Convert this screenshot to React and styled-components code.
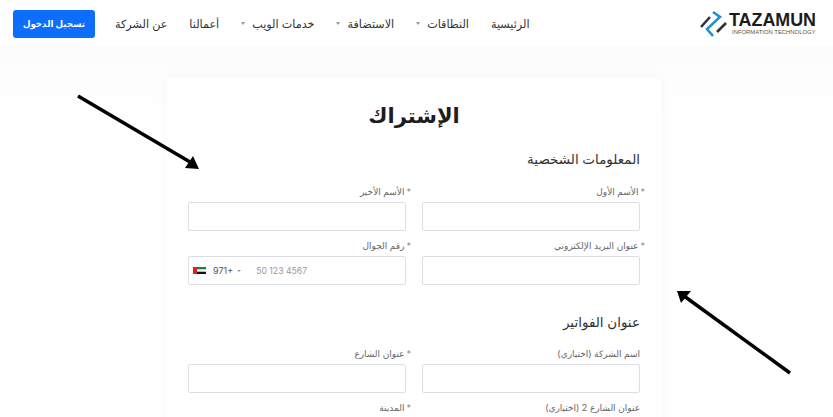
import React from 'react';
import styled, { createGlobalStyle } from 'styled-components';

const GlobalStyle = createGlobalStyle`
  html, body {
    margin: 0;
    padding: 0;
    height: 100%;
    overflow: hidden;
    background: #fff;
    font-family: Inter, "DejaVu Sans", sans-serif;
  }
`;

const navItems = [
  { name: 'الرئيسية' },
  { name: 'النطاقات', caret: true },
  { name: 'الاستضافة', caret: true },
  { name: 'خدمات الويب', caret: true },
  { name: 'أعمالنا' },
  { name: 'عن الشركة' },
];

const Logo = () => (
  <LogoWrap>
    <svg width="28" height="28" viewBox="0 0 28 28">
      <path d="M1 17 L10 7" stroke="#333" strokeWidth="2.6" fill="none" />
      <path d="M13 2 L20 7 L7 19 L13 26" stroke="#1f8fd6" strokeWidth="2.6" fill="none" />
      <path d="M17 22 L26 13" stroke="#333" strokeWidth="2.6" fill="none" />
    </svg>
    <LogoText>
      <LogoName>TAZAMUN</LogoName>
      <LogoSub>INFORMATION TECHNOLOGY</LogoSub>
    </LogoText>
  </LogoWrap>
);

const Field = ({ label, required, children }) => (
  <FieldWrap>
    <Label>
      {required && <Star>*</Star>}
      {label}
    </Label>
    {children || <Input />}
  </FieldWrap>
);

const App = () => (
  <Page dir="rtl">
    <GlobalStyle />
    <Header>
      <Logo />
      <Nav>
        {navItems.map((item) => (
          <NavItem key={item.name}>
            {item.name}
            {item.caret && <Caret />}
          </NavItem>
        ))}
      </Nav>
      <LoginButton>تسجيل الدخول</LoginButton>
    </Header>

    <Main>
      <Card>
        <Title>الإشتراك</Title>
        <Section>المعلومات الشخصية</Section>
        <Grid>
          <Field label="الأسم الأول" required />
          <Field label="الأسم الأخير" required />
          <Field label="عنوان البريد الإلكتروني" required />
          <Field label="رقم الجوال" required>
            <PhoneBox dir="ltr">
              <Flag>
                <svg width="13" height="7" viewBox="0 0 13 7">
                  <rect width="13" height="7" fill="#fff" />
                  <rect width="13" height="2.3" fill="#0a8a3c" />
                  <rect y="4.7" width="13" height="2.3" fill="#111" />
                  <rect width="4" height="7" fill="#e0201c" />
                </svg>
              </Flag>
              <Dial>971+</Dial>
              <SmallCaret />
              <Placeholder>50 123 4567</Placeholder>
            </PhoneBox>
          </Field>
        </Grid>

        <BillingSection>عنوان الفواتير</BillingSection>
        <Grid>
          <Field label="اسم الشركة (اختياري)" />
          <Field label="عنوان الشارع" required />
          <Field label="عنوان الشارع 2 (اختياري)" />
          <Field label="المدينة" required />
        </Grid>
      </Card>
    </Main>

    <Arrow width="833" height="417" viewBox="0 0 833 417">
      <path d="M78 96 L190 162" stroke="#000" strokeWidth="3.5" />
      <path d="M199 169 L185 168 L193 156 Z" fill="#000" />
      <path d="M790 373 L684 296" stroke="#000" strokeWidth="3.5" />
      <path d="M677 291 L691 291 L681 303 Z" fill="#000" />
    </Arrow>
  </Page>
);

const Page = styled.div`
  position: relative;
  width: 833px;
  height: 417px;
  overflow: hidden;
  background: linear-gradient(#f6f6f6, #fdfdfd 70px, #fff 120px);
`;

const Header = styled.header`
  display: flex;
  align-items: center;
  height: 47px;
  padding: 0 17px 0 13px;
  background: #fff;
  box-sizing: border-box;
`;

const LogoWrap = styled.div`
  display: flex;
  direction: ltr;
  align-items: center;
  gap: 1px;
`;

const LogoText = styled.div`
  display: flex;
  flex-direction: column;
  width: 87px;
`;

const LogoName = styled.span`
  font: bold 19px/16px "Liberation Sans", sans-serif;
  color: #1c1c1c;
  transform: scaleX(0.94);
  transform-origin: left center;
`;

const LogoSub = styled.span`
  margin: 2px 0 0 3px;
  font: 5.9px/5px "Liberation Sans", sans-serif;
  color: #555;
  white-space: nowrap;
`;

const Nav = styled.nav`
  display: flex;
  align-items: center;
  justify-content: flex-end;
  gap: 22px;
  flex: 1;
  margin-left: 20px;
`;

const NavItem = styled.span`
  display: flex;
  align-items: center;
  gap: 7px;
  font-size: 11.2px;
  color: #333;
  white-space: nowrap;
`;

const Caret = styled.i`
  width: 0;
  height: 0;
  border-left: 2.5px solid transparent;
  border-right: 2.5px solid transparent;
  border-top: 3px solid #999;
`;

const LoginButton = styled.button`
  width: 82px;
  height: 28px;
  padding: 0;
  border: 0;
  border-radius: 3px;
  background: #0d6efd;
  color: #fff;
  font: bold 8.7px Inter, "DejaVu Sans", sans-serif;
`;

const Main = styled.main`
  display: flex;
  padding: 31px 172px 0 0;
`;

const Card = styled.section`
  width: 494px;
  height: 400px;
  padding: 23px 21px;
  box-sizing: border-box;
  background: #fff;
  border-radius: 4px;
  box-shadow: 0 0 18px rgba(0, 0, 0, 0.03);
`;

const Title = styled.h1`
  margin: 0 0 19px;
  text-align: center;
  font-size: 21px;
  line-height: 30px;
  font-weight: 700;
  color: #1d1d1d;
`;

const Section = styled.h2`
  margin: 0 0 18px;
  font-size: 13.5px;
  line-height: 18px;
  font-weight: 500;
  color: #333;
`;

const BillingSection = styled(Section)`
  margin: 28px 0 17px;
`;

const Grid = styled.div`
  display: grid;
  grid-template-columns: 218px 218px;
  column-gap: 16px;
  row-gap: 9px;
`;

const FieldWrap = styled.div`
  display: flex;
  flex-direction: column;
  gap: 4px;
`;

const Label = styled.label`
  font-size: 9px;
  line-height: 12px;
  color: #666;
`;

const Star = styled.span`
  margin: 0 -5px 0 2px;
  color: #888;
`;

const Input = styled.div`
  height: 29px;
  box-sizing: border-box;
  background: #fff;
  border: 1px solid #dcdfe3;
  border-radius: 2px;
`;

const PhoneBox = styled(Input)`
  display: flex;
  align-items: center;
  padding-left: 4px;
`;

const Flag = styled.span`
  display: flex;
  margin-right: 7px;
`;

const Dial = styled.span`
  font-size: 9px;
  color: #555;
`;

const SmallCaret = styled(Caret)`
  margin: 0 15px 0 4px;
  border-left-width: 2px;
  border-right-width: 2px;
  border-top-width: 2px;
`;

const Placeholder = styled.span`
  font-size: 8.7px;
  color: #999;
`;

const Arrow = styled.svg`
  position: absolute;
  top: 0;
  left: 0;
  pointer-events: none;
`;

export default App;
